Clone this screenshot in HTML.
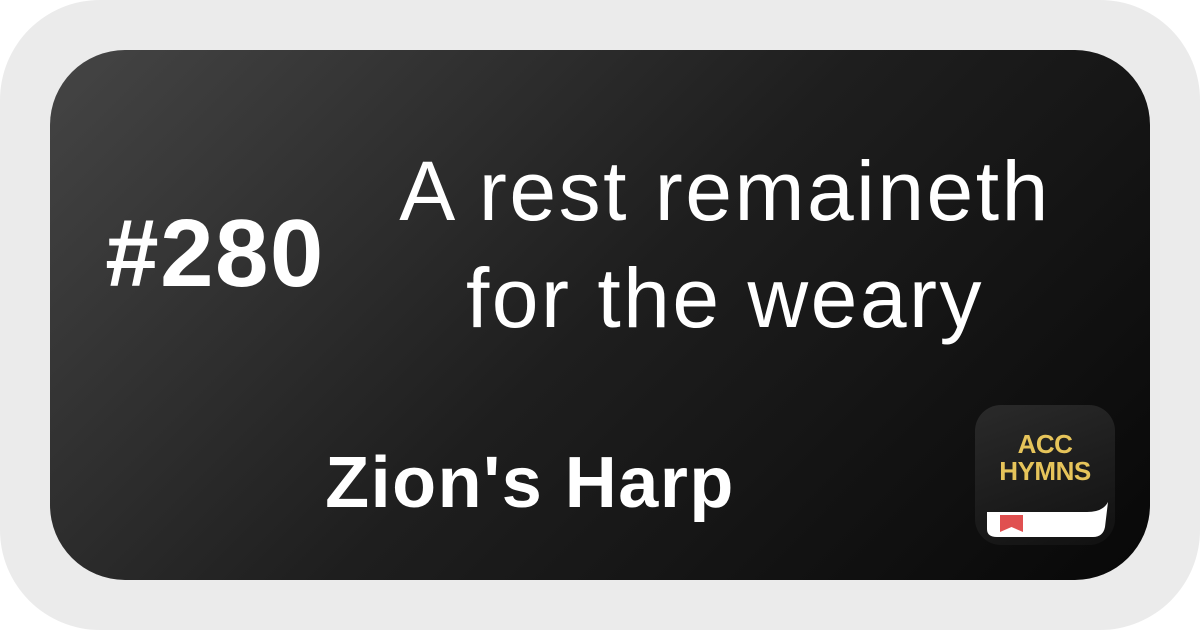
<!DOCTYPE html>
<html><head><style>
html,body{margin:0;padding:0;width:1200px;height:630px;background:#fff;overflow:hidden}
.outer{position:absolute;left:0;top:0;width:1200px;height:630px;background:#ebebeb;border-radius:100px}
.card{position:absolute;left:50px;top:50px;width:1100px;height:530px;border-radius:75px;background:linear-gradient(135deg,#454545 0%,#1e1e1e 50%,#080808 100%)}
.t{position:absolute;color:#fff;font-family:"Liberation Sans",sans-serif;white-space:nowrap;line-height:1}
.num{left:65px;top:206px;font-size:96px;font-weight:bold;width:300px;text-align:center;letter-spacing:1.5px}
.title{left:325px;top:138px;font-size:84px;line-height:107px;width:800px;text-align:center;letter-spacing:2.5px}
.zion{left:230px;top:447px;font-size:72px;font-weight:bold;width:600px;text-align:center;letter-spacing:1.5px}
.logo{position:absolute;left:975px;top:405px;width:140px;height:140px;border-radius:26px;background:linear-gradient(160deg,#2a2a2a,#111)}
.logo .l{position:absolute;left:0;width:140px;text-align:center;color:#e6c45a;font-family:"Liberation Sans",sans-serif;font-weight:bold;font-size:26px;line-height:26px;letter-spacing:-0.5px}
</style></head><body>
<div class="outer"></div>
<div class="card"></div>
<div class="t num">#280</div>
<div class="t title">A rest remaineth<br>for the weary</div>
<div class="t zion">Zion's Harp</div>
<div class="logo">
<div class="l" style="top:26px">ACC</div>
<div class="l" style="top:53px">HYMNS</div>
<svg width="140" height="140" style="position:absolute;left:0;top:0">
<path d="M12 107 L12 124 Q12 132 22 132 L118 132 Q128 132 130 122 L133 97 Q128 107 112 107 Z" fill="#fff"/>
<path d="M25 110 L48 110 L48 127 L36.5 122 L25 127 Z" fill="#e05050"/>
</svg>
</div>
</body></html>
